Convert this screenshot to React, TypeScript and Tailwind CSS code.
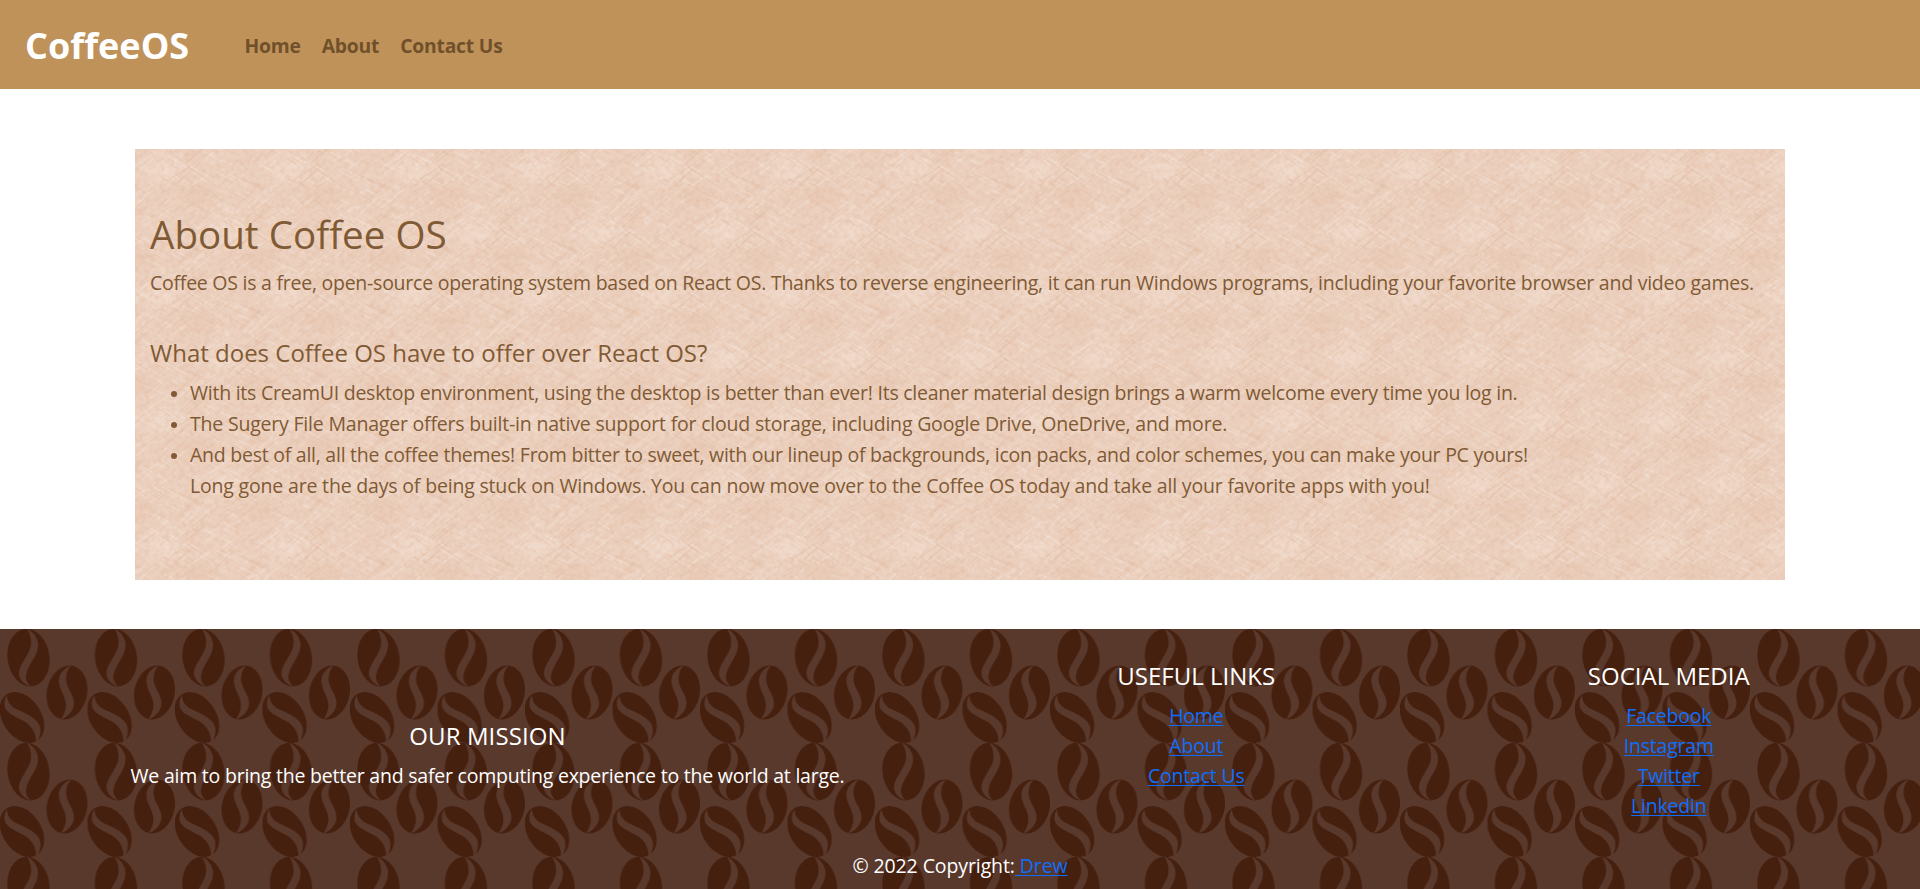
const TILE_W = 125;
const TILE_H = 126;

type Stroke = { x: number; y: number; dx: number; dy: number; color: string; width: number; opacity: number };

function makeStrokes(): Stroke[] {
  let seed = 41;
  const rand = () => {
    seed = (seed * 1664525 + 1013904223) % 4294967296;
    return seed / 4294967296;
  };
  const strokes: Stroke[] = [];
  for (let i = 0; i < 170; i++) {
    const rising = rand() < 0.5;
    const angle = ((rising ? -38 : 30) + (rand() - 0.5) * 12) * (Math.PI / 180);
    const length = 6 + rand() * 24;
    const light = rand() < 0.6;
    strokes.push({
      x: rand() * TILE_W,
      y: rand() * TILE_H,
      dx: Math.cos(angle) * length,
      dy: Math.sin(angle) * length,
      color: light ? "#f5e7dd" : "#e0b99f",
      width: 0.7 + rand() * 1.3,
      opacity: 0.12 + rand() * 0.24,
    });
  }
  return strokes;
}

const strokes = makeStrokes();

const copies = [-1, 0, 1].flatMap((i) =>
  [-1, 0, 1].flatMap((j) => [
    [i * TILE_W, j * TILE_H],
    [(i + 0.5) * TILE_W, (j + 0.5) * TILE_H],
  ]),
);

function PaperTexture() {
  return (
    <svg className="absolute inset-0 h-full w-full" aria-hidden="true">
      <defs>
        <filter id="soft" x="-50%" y="-50%" width="200%" height="200%">
          <feGaussianBlur stdDeviation="6" />
        </filter>
        <filter id="grain" x="0" y="0" width="100%" height="100%" colorInterpolationFilters="sRGB">
          <feTurbulence type="fractalNoise" baseFrequency="0.2" numOctaves="2" seed="7" />
          <feColorMatrix values="0 0 0 0 0.87  0 0 0 0 0.7  0 0 0 0 0.58  1.8 0 0 0 -0.68" />
        </filter>
        <g id="fibres">
          <ellipse cx="30" cy="22" rx="20" ry="12" fill="#f5e4d8" opacity="0.5" filter="url(#soft)" />
          <ellipse cx="62" cy="48" rx="26" ry="9" fill="#dfb698" opacity="0.2" filter="url(#soft)" />
          {strokes.map((s, i) => (
            <path
              key={i}
              d={`M${s.x.toFixed(1)} ${s.y.toFixed(1)}l${s.dx.toFixed(1)} ${s.dy.toFixed(1)}`}
              stroke={s.color}
              strokeWidth={s.width}
              opacity={s.opacity}
            />
          ))}
        </g>
        <pattern id="paper" width={TILE_W} height={TILE_H} patternUnits="userSpaceOnUse">
          <rect width={TILE_W} height={TILE_H} fill="#ecd1c0" />
          {copies.map(([x, y], i) => (
            <use key={i} href="#fibres" x={x} y={y} />
          ))}
        </pattern>
      </defs>
      <rect width="100%" height="100%" fill="url(#paper)" />
      <rect width="100%" height="100%" filter="url(#grain)" opacity="0.4" />
    </svg>
  );
}

function BeanPattern() {
  return (
    <svg className="absolute inset-0 h-full w-full" aria-hidden="true">
      <defs>
        <pattern id="beans" width="87.5" height="114" patternUnits="userSpaceOnUse">
          <rect width="88" height="114" fill="#5a392d" />
          <g fill="#46200f">
            <ellipse cx="28.5" cy="28.6" rx="21" ry="29" transform="rotate(-8 28.5 28.6)" />
            <ellipse cx="67" cy="63.5" rx="20.2" ry="27.3" transform="rotate(12 67 63.5)" />
            <ellipse cx="22" cy="88.5" rx="19.3" ry="27.8" transform="rotate(-34 22 88.5)" />
          </g>
          <g fill="#5a392d">
            <path d="M27 -0.5C32 8 32.500 16 28.500 23.500C24 32 19 38 19 44.500C19 50 24 55 30.500 57.500C26 53 25 49 26.500 44C28.500 35 38 27 38 16C38 9 33 3 27 -0.500Z" />
            <path d="M71 36.500C62 40 58.500 47 59 53C59.500 61 66 68 66 76C66 81 64 86 61 90.500C69 87 74 81 74 74C74 66 66.500 59 66 51C66 46 67 41 71 36.500Z" />
            <path d="M7 66.500C7 73 11 78 18 81C27 85 38 90 40 98C41 103 40 108 37.500 112L36 112C36 105 33 99 27 94C19 88.500 5 85 4.500 76C4.300 72 5 69 7 66.500Z" />
          </g>
        </pattern>
      </defs>
      <rect width="100%" height="100%" fill="url(#beans)" />
    </svg>
  );
}

function LinkList({ title, links }: { title: string; links: string[] }) {
  return (
    <div className="w-1/4">
      <h5 className="mb-2.5 text-[24px] leading-[30px] tracking-normal">{title}</h5>
      <ul>
        {links.map((label) => (
          <li key={label}>
            <a href="#" className="text-[#0d6efd] underline underline-offset-2">
              {label}
            </a>
          </li>
        ))}
      </ul>
    </div>
  );
}

export default function App() {
  return (
    <div className="h-[889px] overflow-hidden bg-white font-['Open_Sans','Noto_Sans',sans-serif] text-[19.5px] leading-[30px] tracking-[-0.25px]">
      <nav className="flex h-[89px] items-center bg-[#bf925a] pt-0.5 pl-[25px] font-bold tracking-normal">
        <a href="#" className="w-[219.5px] text-[36px] leading-[54px] text-white">
          CoffeeOS
        </a>
        <div className="flex gap-[21px] text-[19.3px] tracking-[-0.2px] text-[#70502b]">
          <a href="#">Home</a>
          <a href="#">About</a>
          <a href="#">Contact Us</a>
        </div>
      </nav>

      <main className="pt-[60px] pb-[49px]">
        <section className="relative mx-[135px] h-[431px] text-[#7f5a34]">
          <PaperTexture />
          <div className="relative pt-[61px] pl-[15px]">
            <h1 className="text-[38.6px] leading-[48px] tracking-normal">About Coffee OS</h1>
            <p className="mt-[9px] leading-[31px]">
              Coffee OS is a free, open-source operating system based on React OS. Thanks to reverse engineering, it can
              run Windows programs, including your favorite browser and video games.
            </p>
            <h3 className="mt-10 text-[24px] leading-[30px] tracking-normal">
              What does Coffee OS have to offer over React OS?
            </h3>
            <ul className="mt-[9px] list-disc pl-10 leading-[31px] marker:text-[18px]">
              <li>
                With its CreamUI desktop environment, using the desktop is better than ever! Its cleaner material
                design brings a warm welcome every time you log in.
              </li>
              <li className="tracking-[-0.2px]">
                The Sugery File Manager offers built-in native support for cloud storage, including Google Drive,
                OneDrive, and more.
              </li>
              <li>
                And best of all, all the coffee themes! From bitter to sweet, with our lineup of backgrounds, icon
                packs, and color schemes, you can make your PC yours!
                <br />
                <span className="tracking-[-0.18px]">
                  Long gone are the days of being stuck on Windows. You can now move over to the Coffee OS today and
                  take all your favorite apps with you!
                </span>
              </li>
            </ul>
          </div>
        </section>
      </main>

      <footer className="relative h-[260px] text-center tracking-[-0.22px] text-white">
        <BeanPattern />
        <div className="relative px-[15px] pt-8">
          <div className="flex">
            <div className="flex w-1/2 flex-col justify-center pt-[30px]">
              <h5 className="mb-2.5 text-[24px] leading-[30px] tracking-[0.1px]">OUR MISSION</h5>
              <p>We aim to bring the better and safer computing experience to the world at large.</p>
            </div>
            <LinkList title="USEFUL LINKS" links={["Home", "About", "Contact Us"]} />
            <LinkList title="SOCIAL MEDIA" links={["Facebook", "Instagram", "Twitter", "Linkedin"]} />
          </div>
          <div className="mt-[30px] tracking-[-0.1px]">
            © 2022 Copyright:
            <a href="#" className="whitespace-pre text-[#0d6efd] underline underline-offset-2">
              {" Drew"}
            </a>
          </div>
        </div>
      </footer>
    </div>
  );
}
